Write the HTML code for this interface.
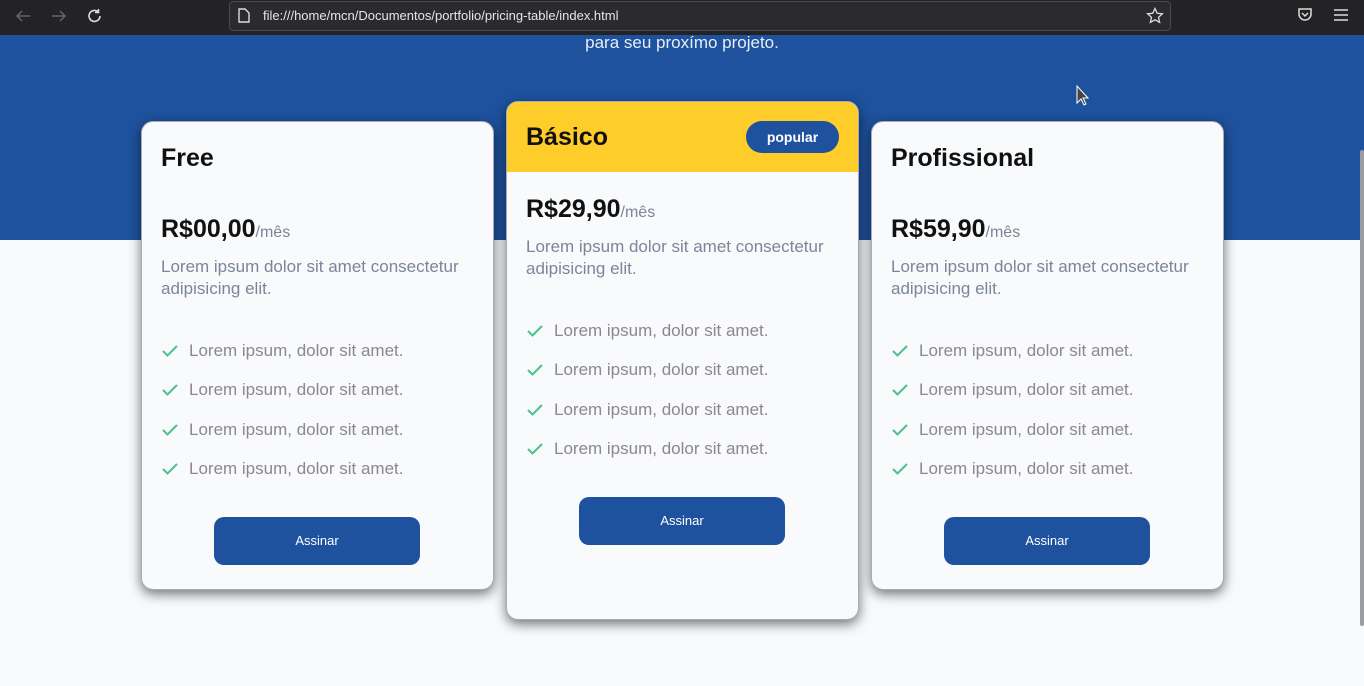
<!DOCTYPE html>
<html><head><meta charset="utf-8"><style>
*{margin:0;padding:0;box-sizing:border-box}
body{width:1364px;height:686px;overflow:hidden;background:#f8fafc;font-family:"Liberation Sans","DejaVu Sans",sans-serif;position:relative}
.bar{position:absolute;left:0;top:0;width:1364px;height:35px;background:#232325}
.url{position:absolute;left:229px;top:1px;width:942px;height:30px;border:1px solid #4a4a4c;border-radius:4px;background:#2b2b2d;color:#e6e6e6;font-size:13px;line-height:28px;padding-left:33px}
.blue{position:absolute;left:0;top:35px;width:1364px;height:205px;background:#1e529e}
.sub{position:absolute;left:0;width:1364px;top:-2px;text-align:center;color:#e8eef8;font-size:17px}
.card{position:absolute;width:353px;background:#f8fafc;border:1px solid #aab;border-radius:12px;box-shadow:0 4px 12px rgba(0,0,0,.55);overflow:hidden}
.t{position:absolute;left:19px;font-size:25px;font-weight:bold;color:#111}
.p{position:absolute;left:19px;font-size:25px;font-weight:bold;color:#111}
.p span{font-size:16px;font-weight:normal;color:#7d8494}
.d{position:absolute;left:19px;width:325px;font-size:17px;line-height:22px;color:#7c8599}
.f{position:absolute;left:19px;font-size:17px;color:#8c8790;height:20px;line-height:20px}
.f svg{position:absolute;left:1px;top:3px}
.f b{font-weight:normal;position:absolute;left:28px;white-space:nowrap}
.btn{position:absolute;left:72px;width:206px;height:48px;border-radius:10px;background:#1e529e;color:#fff;font-size:13px;text-align:center;line-height:48px}
.hd{position:absolute;left:0;top:0;width:353px;height:70px;background:#ffcd2a}
.badge{position:absolute;left:239px;top:19px;width:93px;height:32px;border-radius:16px;background:#1e529e;color:#fff;font-size:14px;font-weight:bold;text-align:center;line-height:32px}
</style></head><body>
<div class="bar">
<svg style="position:absolute;left:14px;top:8px" width="18" height="16"><path d="M16 8H3M8 3L3 8l5 5" stroke="#666" stroke-width="1.5" fill="none"/></svg>
<svg style="position:absolute;left:50px;top:8px" width="18" height="16"><path d="M2 8h13M10 3l5 5-5 5" stroke="#666" stroke-width="1.5" fill="none"/></svg>
<svg style="position:absolute;left:86px;top:7px" width="18" height="18"><path d="M14 9a5.5 5.5 0 1 1-2-4.3M12.5 2v3.5H9" stroke="#ddd" stroke-width="1.6" fill="none"/></svg>
<div class="url">file:///home/mcn/Documentos/portfolio/pricing-table/index.html</div>
<svg style="position:absolute;left:238px;top:8px" width="12" height="15"><path d="M1 1h6l4 4v9H1z" stroke="#ddd" stroke-width="1.4" fill="none"/></svg>
<svg style="position:absolute;left:1146px;top:7px" width="18" height="18"><path d="M9 1.5l2.2 4.8 5.2.5-3.9 3.5 1.1 5.1L9 12.8l-4.6 2.6 1.1-5.1L1.6 6.8l5.2-.5z" stroke="#ddd" stroke-width="1.3" fill="none"/></svg>
<svg style="position:absolute;left:1297px;top:7px" width="16" height="16"><path d="M2 2h12v5a6 6 0 0 1-12 0z" stroke="#ddd" stroke-width="1.5" fill="none"/><path d="M5 6l3 3 3-3" stroke="#ddd" stroke-width="1.5" fill="none"/></svg>
<svg style="position:absolute;left:1334px;top:9px" width="14" height="12"><path d="M0 1h14M0 6h14M0 11h14" stroke="#ddd" stroke-width="1.5"/></svg>
</div>
<div class="blue"><div class="sub">para seu proxímo projeto.</div></div>
<div style="position:absolute;left:1360px;top:150px;width:4px;height:476px;background:#9a9ca2;border-radius:2px"></div>
<svg style="position:absolute;left:1076px;top:85px" width="14" height="22"><path d="M1 1v17l4-4 3 6 2-1-3-6h5z" fill="#444" stroke="#fff" stroke-width="1"/></svg>

<div class="card" style="left:141px;top:121px;height:469px">
<div class="t" style="top:22px">Free</div>
<div class="p" style="top:93px">R$00,00<span>/mês</span></div>
<div class="d" style="top:134px">Lorem ipsum dolor sit amet consectetur adipisicing elit.</div>
<div class="f" style="top:219px"><svg width="16" height="14"><path d="M1 7l4.5 4.5L15 2" stroke="#4cc18a" stroke-width="2" fill="none"/></svg><b>Lorem ipsum, dolor sit amet.</b></div>
<div class="f" style="top:258px"><svg width="16" height="14"><path d="M1 7l4.5 4.5L15 2" stroke="#4cc18a" stroke-width="2" fill="none"/></svg><b>Lorem ipsum, dolor sit amet.</b></div>
<div class="f" style="top:298px"><svg width="16" height="14"><path d="M1 7l4.5 4.5L15 2" stroke="#4cc18a" stroke-width="2" fill="none"/></svg><b>Lorem ipsum, dolor sit amet.</b></div>
<div class="f" style="top:337px"><svg width="16" height="14"><path d="M1 7l4.5 4.5L15 2" stroke="#4cc18a" stroke-width="2" fill="none"/></svg><b>Lorem ipsum, dolor sit amet.</b></div>
<div class="btn" style="top:395px">Assinar</div>
</div>

<div class="card" style="left:506px;top:101px;height:519px">
<div class="hd"></div>
<div class="t" style="top:21px">Básico</div>
<div class="badge">popular</div>
<div class="p" style="top:93px">R$29,90<span>/mês</span></div>
<div class="d" style="top:134px">Lorem ipsum dolor sit amet consectetur adipisicing elit.</div>
<div class="f" style="top:219px"><svg width="16" height="14"><path d="M1 7l4.5 4.5L15 2" stroke="#4cc18a" stroke-width="2" fill="none"/></svg><b>Lorem ipsum, dolor sit amet.</b></div>
<div class="f" style="top:258px"><svg width="16" height="14"><path d="M1 7l4.5 4.5L15 2" stroke="#4cc18a" stroke-width="2" fill="none"/></svg><b>Lorem ipsum, dolor sit amet.</b></div>
<div class="f" style="top:298px"><svg width="16" height="14"><path d="M1 7l4.5 4.5L15 2" stroke="#4cc18a" stroke-width="2" fill="none"/></svg><b>Lorem ipsum, dolor sit amet.</b></div>
<div class="f" style="top:337px"><svg width="16" height="14"><path d="M1 7l4.5 4.5L15 2" stroke="#4cc18a" stroke-width="2" fill="none"/></svg><b>Lorem ipsum, dolor sit amet.</b></div>
<div class="btn" style="top:395px">Assinar</div>
</div>

<div class="card" style="left:871px;top:121px;height:469px">
<div class="t" style="top:22px">Profissional</div>
<div class="p" style="top:93px">R$59,90<span>/mês</span></div>
<div class="d" style="top:134px">Lorem ipsum dolor sit amet consectetur adipisicing elit.</div>
<div class="f" style="top:219px"><svg width="16" height="14"><path d="M1 7l4.5 4.5L15 2" stroke="#4cc18a" stroke-width="2" fill="none"/></svg><b>Lorem ipsum, dolor sit amet.</b></div>
<div class="f" style="top:258px"><svg width="16" height="14"><path d="M1 7l4.5 4.5L15 2" stroke="#4cc18a" stroke-width="2" fill="none"/></svg><b>Lorem ipsum, dolor sit amet.</b></div>
<div class="f" style="top:298px"><svg width="16" height="14"><path d="M1 7l4.5 4.5L15 2" stroke="#4cc18a" stroke-width="2" fill="none"/></svg><b>Lorem ipsum, dolor sit amet.</b></div>
<div class="f" style="top:337px"><svg width="16" height="14"><path d="M1 7l4.5 4.5L15 2" stroke="#4cc18a" stroke-width="2" fill="none"/></svg><b>Lorem ipsum, dolor sit amet.</b></div>
<div class="btn" style="top:395px">Assinar</div>
</div>
</body></html>
